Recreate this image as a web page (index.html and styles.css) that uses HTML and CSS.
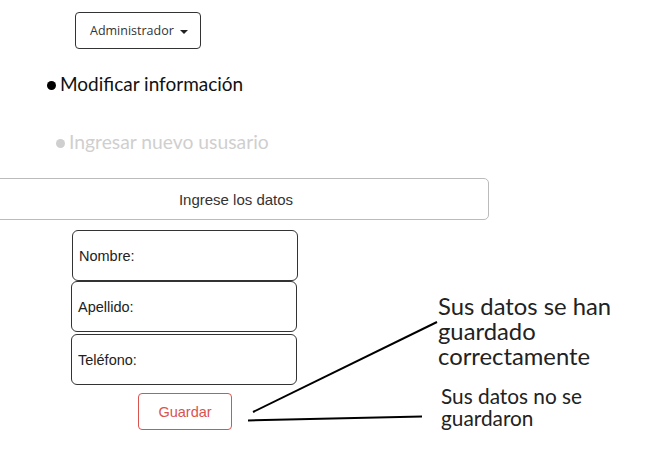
FILE: index.html
```html
<!DOCTYPE html>
<html lang="es">
<head>
<meta charset="utf-8">
<title>Administrador</title>
<link rel="stylesheet" href="styles.css">
</head>
<body>
<div class="page">
  <div class="top">
    <button class="dropdown">Administrador <span class="caret"></span></button>
  </div>
  <ul class="menu">
    <li class="item active"><span class="dot"></span>Modificar información</li>
    <li class="item muted"><span class="dot"></span>Ingresar nuevo ususario</li>
  </ul>
  <div class="panel">Ingrese los datos</div>
  <div class="form">
    <div class="field f1">Nombre:</div>
    <div class="field f2">Apellido:</div>
    <div class="field f3">Teléfono:</div>
    <div class="actions"><button class="save">Guardar</button></div>
  </div>
  <svg class="lines" width="645" height="463" viewBox="0 0 645 463">
    <line x1="253" y1="412" x2="437" y2="322" stroke="#000" stroke-width="2"/>
    <line x1="248" y1="420.5" x2="422" y2="416.5" stroke="#000" stroke-width="2"/>
  </svg>
  <div class="note ok">Sus datos se han<br>guardado<br>correctamente</div>
  <div class="note fail">Sus datos no se<br>guardaron</div>
</div>
</body>
</html>
```
FILE: styles.css
```css
html, body {
  margin: 0;
  padding: 0;
  background: #fff;
}
.page {
  position: relative;
  width: 645px;
  height: 463px;
  overflow: hidden;
  font-family: "Liberation Sans", Arial, sans-serif;
}
.top {
  padding: 12px 0 0 75px;
}
.dropdown {
  box-sizing: border-box;
  width: 126px;
  height: 37px;
  border: 1px solid #333;
  border-radius: 4px;
  background: #fff;
  font-family: "Open Sans", sans-serif;
  font-size: 12.5px;
  color: #333;
  padding: 0 0 0 14px;
  display: flex;
  align-items: center;
  gap: 6px;
}
.caret {
  width: 0;
  height: 0;
  border-left: 4.5px solid transparent;
  border-right: 4.5px solid transparent;
  border-top: 4px solid #222;
  margin-top: 2px;
}
.menu {
  list-style: none;
  margin: 0;
  padding: 0;
  font-family: Lato, sans-serif;
  font-size: 19px;
}
.item {
  display: flex;
  align-items: center;
  height: 22px;
}
.item.active {
  margin-top: 23px;
  padding-left: 47px;
  color: #111;
}
.item.muted {
  margin-top: 36px;
  padding-left: 56px;
  color: #cfcfcf;
  font-size: 19.3px;
}
.dot {
  width: 9px;
  height: 9px;
  border-radius: 50%;
  background: currentColor;
  margin: 4px 4px 0 0;
}
.item.active .dot { background: #000; }
.panel {
  box-sizing: border-box;
  margin: 26px 0 0 -17px;
  width: 506px;
  height: 42px;
  border: 1px solid #bbb;
  border-radius: 5px;
  display: flex;
  align-items: center;
  justify-content: center;
  font-size: 15px;
  color: #333;
}
.form {
  margin-top: 10px;
  display: flex;
  flex-direction: column;
}
.field {
  box-sizing: border-box;
  width: 226px;
  height: 51px;
  border: 1px solid #333;
  border-radius: 6px;
  display: flex;
  align-items: center;
  padding-left: 6px;
  font-size: 14.5px;
  color: #222;
}
.f1 { margin-left: 72px; }
.f2 { margin-left: 71px; }
.f3 { margin-left: 71px; margin-top: 2px; }
.actions {
  padding: 8px 0 0 138px;
}
.save {
  box-sizing: border-box;
  width: 94px;
  height: 37px;
  border: 1px solid #d9534f;
  border-radius: 4px;
  background: #fff;
  color: #d9534f;
  font-family: "Liberation Sans", Arial, sans-serif;
  font-size: 14.5px;
}
.lines {
  position: absolute;
  left: 0;
  top: 0;
}
.note {
  position: absolute;
  font-family: Lato, sans-serif;
  color: #222;
}
.note.ok {
  left: 438px;
  top: 294px;
  font-size: 23.8px;
  line-height: 25px;
}
.note.fail {
  left: 441px;
  top: 385px;
  font-size: 20.8px;
  line-height: 22px;
}
```
